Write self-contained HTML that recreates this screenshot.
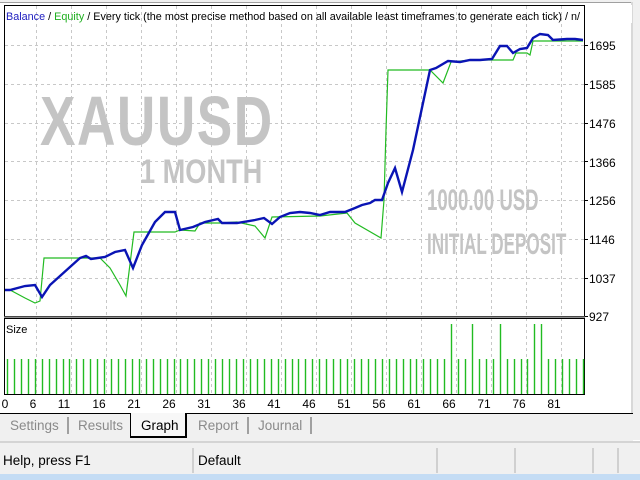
<!DOCTYPE html>
<html><head><style>
body{margin:0;width:640px;height:480px;overflow:hidden;background:#fff;font-family:"Liberation Sans",sans-serif;position:relative}
.a{position:absolute}
</style></head><body>
<div class="a" style="left:0;top:0;width:640px;height:2px;background:#f0f0f0"></div>
<div class="a" style="left:0;top:2px;width:632px;height:1px;background:#a0a0a0"></div>
<div class="a" style="left:631px;top:2px;width:2px;height:437px;background:#d8d8d8"></div>
<div class="a" style="left:633px;top:0;width:7px;height:440px;background:#f0f0f0"></div>
<svg class="a" style="left:0;top:0" width="632" height="413" font-family="Liberation Sans, sans-serif">
<g stroke="#c8c8c8" stroke-dasharray="3,3" stroke-width="1">
<line x1="5" y1="45.5" x2="584" y2="45.5"/><line x1="5" y1="84.5" x2="584" y2="84.5"/><line x1="5" y1="123.5" x2="584" y2="123.5"/><line x1="5" y1="161.5" x2="584" y2="161.5"/><line x1="5" y1="200.5" x2="584" y2="200.5"/><line x1="5" y1="239.5" x2="584" y2="239.5"/><line x1="5" y1="278.5" x2="584" y2="278.5"/>
<path d="M36.5 6V394M71.5 6V394M106.5 6V394M141.5 6V394M176.5 6V394M211.5 6V394M246.5 6V394M281.5 6V394M316.5 6V394M351.5 6V394M386.5 6V394M421.5 6V394M456.5 6V394M491.5 6V394M526.5 6V394M561.5 6V394"/>
</g>
<g fill="#c4c4c4" font-weight="bold">
<text x="40" y="145" font-size="70" transform="translate(40,0) scale(0.76,1) translate(-40,0)" style="letter-spacing:2px">XAUUSD</text>
<text x="140" y="183" font-size="34" transform="translate(140,0) scale(0.8,1) translate(-140,0)">1 MONTH</text>
<text x="427" y="210" font-size="30" transform="translate(427,0) scale(0.62,1) translate(-427,0)">1000.00 USD</text>
<text x="427" y="254" font-size="30" transform="translate(427,0) scale(0.57,1) translate(-427,0)">INITIAL DEPOSIT</text>
</g>
<polyline fill="none" stroke="#22bb22" stroke-width="1.2" points="4,290 10,290 25,298 35,303 40,301 44,258 100,258 110,268 120,285 126,296 134,232 175,232 180,230 195,231 200,223 220,223 237,222 255,226 265,238 272,217 320,216 347,213 355,223 381,238 384,200 386,130 388,70 430,70 443,83 451,62 470,60 513,60 516,53 527,53 530,55 533,41 583,41"/>
<polyline fill="none" stroke="#0a14b4" stroke-width="2.4" points="4,290 10,290 25,286 35,285 42,297 50,285 70,267 80,258 86,256 91,259 105,257 115,252 125,250 133,268 142,245 155,222 165,212 175,212 180,230 193,227 205,222 218,219 222,223 237,223 255,220 264,218 272,224 280,217 290,213 300,212 310,213 320,215 330,212 345,212 355,208 362,205 370,203 375,200 382,200 388,183 395,168 402,192 413,150 430,70 436,68 448,61 460,62 470,60 480,60 492,59 500,46 507,46 513,53 520,49 527,48 533,38 540,34 548,35 553,40 567,39 575,39 583,40"/>
<rect x="4.5" y="5.5" width="580" height="311" fill="none" stroke="#000"/>
<line x1="4" y1="317.5" x2="585" y2="317.5" stroke="#909090" stroke-width="2"/>
<rect x="4.5" y="318.5" width="580" height="76" fill="none" stroke="#000"/>
<text x="6" y="20" font-size="11" textLength="574" lengthAdjust="spacingAndGlyphs"><tspan fill="#2020c0">Balance</tspan> / <tspan fill="#20b020">Equity</tspan> / Every tick (the most precise method based on all available least timeframes to generate each tick) / n/</text>
<rect x="585" y="5" width="47" height="18" fill="#fff"/>
<text x="6" y="333" font-size="11">Size</text>
<g font-size="12" fill="#000">
<text x="589" y="50">1695</text><text x="589" y="89">1585</text><text x="589" y="128">1476</text><text x="589" y="167">1366</text><text x="589" y="205">1256</text><text x="589" y="244">1146</text><text x="589" y="283">1037</text><text x="589" y="321">927</text>
</g>
<g stroke="#000"><path d="M585 45.5h3M585 84.5h3M585 123.5h3M585 161.5h3M585 200.5h3M585 239.5h3M585 278.5h3M585 316.5h3"/></g>
<g font-size="12" text-anchor="middle">
<text x="5" y="408">0</text><text x="33" y="408">6</text><text x="64" y="408">11</text><text x="99" y="408">16</text><text x="134" y="408">21</text><text x="169" y="408">26</text><text x="204" y="408">31</text><text x="239" y="408">36</text><text x="274" y="408">41</text><text x="309" y="408">46</text><text x="344" y="408">51</text><text x="379" y="408">56</text><text x="414" y="408">61</text><text x="449" y="408">66</text><text x="484" y="408">71</text><text x="519" y="408">76</text><text x="554" y="408">81</text>
</g>
<g id="bars" stroke="#22bb22" stroke-width="1.4"></g>
</svg>
<script>
var g=document.getElementById('bars'),s='',tall=[64,67,71,76,77];
for(var i=0;i<=83;i++){var x=Math.round(7+i*576/83)+0.5;var t=tall.indexOf(i)>=0?324:359;s+='<line x1="'+x+'" y1="'+t+'" x2="'+x+'" y2="394"/>';}
g.innerHTML=s;
</script>
<div class="a" style="left:0;top:413px;width:633px;height:28px;background:#f0f0f0;border-top:1px solid #000"></div>
<div class="a" style="left:130px;top:413px;width:54px;height:23px;background:#f7f7f7;border:1px solid #000;border-top:none;border-width:0 2px 2px 1px"></div>
<div class="a" style="left:10px;top:418px;font-size:13.5px;color:#8a8a8a">Settings</div>
<div class="a" style="left:67px;top:417px;width:2px;height:17px;background:#a0a0a0"></div>
<div class="a" style="left:78px;top:418px;font-size:13.5px;color:#8a8a8a">Results</div>
<div class="a" style="left:141px;top:418px;font-size:13.5px;color:#000">Graph</div>
<div class="a" style="left:198px;top:418px;font-size:13.5px;color:#8a8a8a">Report</div>
<div class="a" style="left:247px;top:417px;width:2px;height:17px;background:#a0a0a0"></div>
<div class="a" style="left:258px;top:418px;font-size:13.5px;color:#8a8a8a">Journal</div>
<div class="a" style="left:310px;top:417px;width:2px;height:17px;background:#a0a0a0"></div>
<div class="a" style="left:0;top:441px;width:640px;height:33px;background:#f0f0f0;border-top:2px solid #d4d4d4"></div>
<div class="a" style="left:3px;top:453px;font-size:13.5px">Help, press F1</div>
<div class="a" style="left:192px;top:448px;width:2px;height:25px;background:#d0d0d0"></div>
<div class="a" style="left:198px;top:453px;font-size:13.5px">Default</div>
<div class="a" style="left:436px;top:448px;width:2px;height:25px;background:#d0d0d0"></div>
<div class="a" style="left:514px;top:448px;width:2px;height:25px;background:#d0d0d0"></div>
<div class="a" style="left:592px;top:448px;width:2px;height:25px;background:#d0d0d0"></div>
<div class="a" style="left:617px;top:448px;width:2px;height:25px;background:#d0d0d0"></div>
<div class="a" style="left:0;top:474px;width:640px;height:6px;background:#c4dcf4"></div>
</body></html>
